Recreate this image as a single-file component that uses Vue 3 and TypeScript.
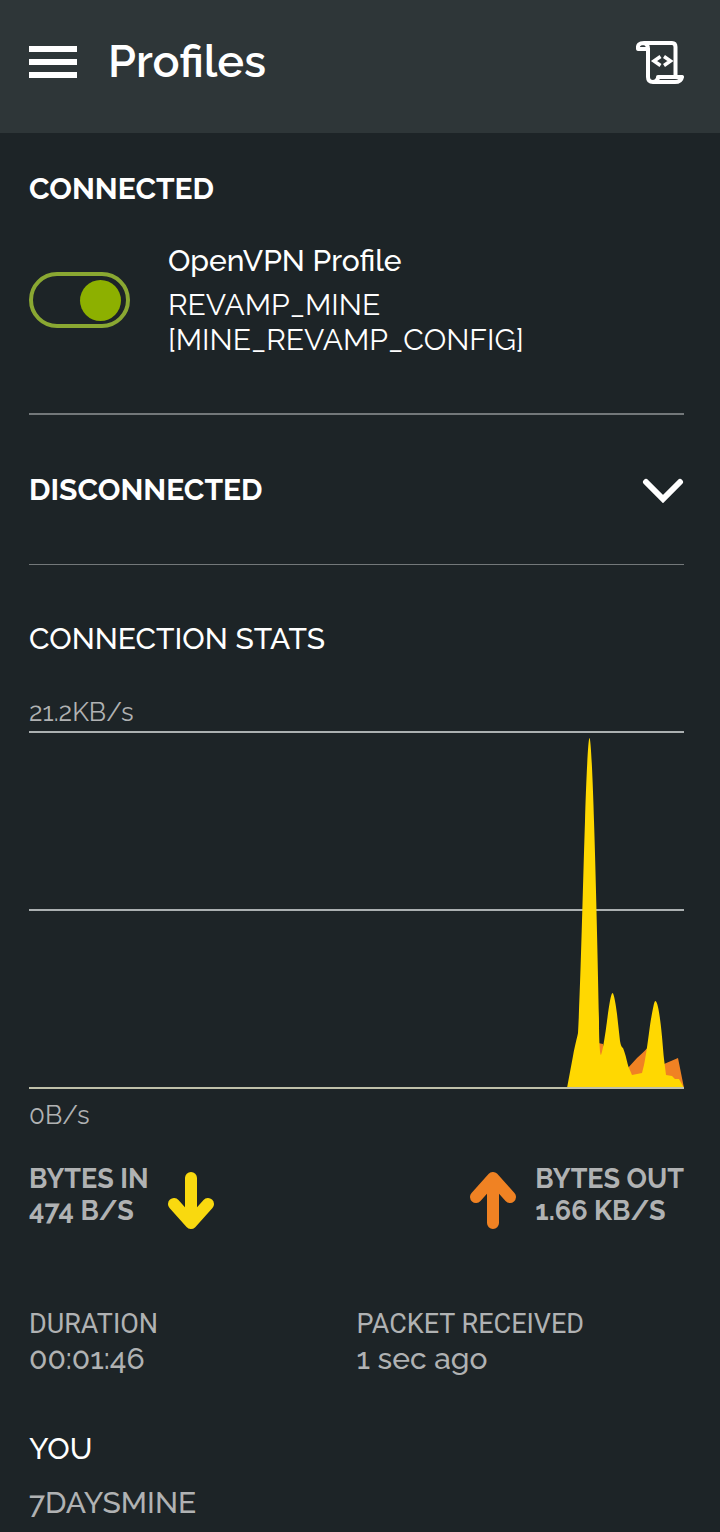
<script setup lang="ts">
import { ref } from 'vue'

interface Profile {
  kind: string
  name: string
}

const profile: Profile = {
  kind: 'OpenVPN Profile',
  name: 'REVAMP_MINE [MINE_REVAMP_CONFIG]',
}
const connected = ref(true)

const gridLines: number[] = [1, 179, 357]

const bytesInArea =
  'M538 357 L544 325 C546 314 548 307 549 302 C552 245 554 150 556 90 C557 55 559 7 560.5 7 C562 7 564 55 565 90 C567 150 569 240 570 290 C570 310 571 324 572 324 C574 320 577 298 578 290 C580 275 582 262 583.5 262 C585 262 587 275 588 283 L591 310 Q592 316 594 317 C597 324 598 332 600 337 L603 344 L613 342 L615 334 C618 320 620 300 622 288 C624 278 625 270 626.5 270 C628 270 630 279 631 288 C633 302 634 318 635 328 L637 344 L643 345 L646 348 L650 348 L655 357 Z'
const bytesOutArea =
  'M569 357 L569 312 L574 313 L576 330 L598 338 L608 327 Q617 319 622 313 L635 333 L649 327 L655 357 Z'
</script>

<template>
  <div class="screen">
    <header class="bar">
      <button class="icon-button" type="button" aria-label="Menu">
        <svg width="48" height="32" viewBox="0 0 48 32" fill="#fff">
          <rect width="48" height="6" />
          <rect y="13" width="48" height="6" />
          <rect y="26" width="48" height="6" />
        </svg>
      </button>
      <h1>Profiles</h1>
      <button class="icon-button" type="button" aria-label="Log">
        <svg width="48" height="44" viewBox="0 0 48 44" fill="none" stroke="#fff" stroke-width="4" stroke-linejoin="round">
          <path d="M8 3H36Q39.500 3 39.500 7V35" />
          <path d="M12 8V37Q12 42 17 42H39Q45 42 46 37H22V38Q21 42 17 42" />
          <path d="M12 9H2Q1 3 8 3Q12 4 12 9" />
          <path d="M24.500 16.500L18 21L24.500 25.500M28 16.500L34.500 21L28 25.500" stroke-width="3.500" stroke-linejoin="miter" />
        </svg>
      </button>
    </header>

    <main>
      <section class="connected">
        <h2 class="strong">CONNECTED</h2>
        <div class="profile">
          <input id="profile-switch" v-model="connected" class="switch" type="checkbox" role="switch" />
          <label for="profile-switch">
            <span class="kind">{{ profile.kind }}</span>
            <span class="name">{{ profile.name }}</span>
          </label>
        </div>
      </section>

      <section class="disconnected">
        <h2 class="strong">DISCONNECTED</h2>
        <button class="icon-button" type="button" aria-label="Show disconnected profiles">
          <svg width="42" height="26" viewBox="0 0 42 26" fill="none" stroke="#fff" stroke-width="6" stroke-linecap="round">
            <path d="M4 5L21 22L38 5" />
          </svg>
        </button>
      </section>

      <section class="stats">
        <h2>CONNECTION STATS</h2>
        <p class="scale">21.2KB/s</p>
        <svg class="chart" viewBox="0 0 655 358" preserveAspectRatio="none" role="img" aria-label="Connection speed">
          <line v-for="y in gridLines" :key="y" x1="0" x2="655" :y1="y" :y2="y" stroke="#abb0b1" stroke-width="2" />
          <path :d="bytesOutArea" fill="#f08223" />
          <path :d="bytesInArea" fill="#ffd801" />
          <line x1="0" x2="655" y1="357" y2="357" stroke="#bfc0aa" stroke-width="2" />
        </svg>
        <p class="scale">0B/s</p>

        <div class="traffic">
          <div class="flow">
            <p>BYTES IN<br />474 B/S</p>
            <svg width="46" height="58" viewBox="0 0 46 58" fill="none" stroke="#f9d90f" stroke-width="12" stroke-linecap="round" stroke-linejoin="round">
              <path d="M23 6V51M6 32L23 51L40 32" />
            </svg>
          </div>
          <div class="flow">
            <svg width="46" height="58" viewBox="0 0 46 58" fill="none" stroke="#f08223" stroke-width="12" stroke-linecap="round" stroke-linejoin="round">
              <path d="M23 51V6M6 25L23 6L40 25" />
            </svg>
            <p>BYTES OUT<br />1.66 KB/S</p>
          </div>
        </div>

        <dl class="facts">
          <div>
            <dt>DURATION</dt>
            <dd>00:01:46</dd>
          </div>
          <div>
            <dt>PACKET RECEIVED</dt>
            <dd>1 sec ago</dd>
          </div>
        </dl>
      </section>

      <section class="you">
        <h2>YOU</h2>
        <p>7DAYSMINE</p>
      </section>
    </main>
  </div>
</template>

<style>
body {
  margin: 0;
  background: #1d2427;
}
</style>

<style scoped>
.screen {
  min-height: 100vh;
  background: #1d2427;
  color: #fff;
  font-family: Raleway, Lato, sans-serif;
  overflow: hidden;
}
h1,
h2,
p,
dl,
dd {
  margin: 0;
}
svg {
  display: block;
}
.bar {
  display: flex;
  align-items: center;
  gap: 31px;
  padding: 32px 36px 41px 29px;
  background: #2e3638;
}
h1 {
  flex: 1;
  font-size: 45px;
  line-height: 60px;
  font-weight: 600;
}
.icon-button {
  padding: 0;
  border: 0;
  background: none;
  cursor: pointer;
}
main {
  padding: 0 36px 0 29px;
}
h2 {
  font-size: 30px;
  line-height: 36px;
  font-weight: 500;
}
.strong {
  font-weight: 700;
}
.connected {
  padding: 38px 0 56px;
  border-bottom: 2px solid #73787a;
}
.profile {
  display: flex;
  align-items: center;
  gap: 38px;
  margin-top: 36px;
}
.switch {
  flex: none;
  display: flex;
  align-items: center;
  justify-content: flex-start;
  appearance: none;
  box-sizing: border-box;
  width: 101px;
  height: 56px;
  margin: 0;
  padding: 0 5px;
  border: 4px solid #8aa832;
  border-radius: 28px;
}
.switch::before {
  content: '';
  width: 41px;
  height: 41px;
  border-radius: 50%;
  background: #8db000;
}
.switch:checked {
  justify-content: flex-end;
}
.kind,
.name {
  display: block;
  font-size: 30px;
  line-height: 35px;
}
.kind {
  margin-bottom: 9px;
  font-weight: 500;
}
.name {
  max-width: 360px;
  font-weight: 400;
}
.disconnected {
  display: flex;
  align-items: center;
  justify-content: space-between;
  padding: 57px 0 56px;
  border-bottom: 1px solid #73787a;
}
.stats {
  padding-top: 56px;
  color: #b0b2b3;
}
.stats h2 {
  color: #fff;
}
.scale {
  font-size: 26px;
  line-height: 32px;
}
h2 + .scale {
  margin-top: 39px;
}
.chart {
  width: 100%;
  height: 358px;
  margin: 3px 0 10px;
}
.traffic {
  display: flex;
  justify-content: space-between;
  margin-top: 32px;
}
.flow {
  display: flex;
  align-items: flex-start;
  gap: 19px;
  font-size: 27px;
  line-height: 32px;
  font-weight: 700;
}
.flow svg {
  margin-top: 9px;
}
.facts {
  display: grid;
  grid-template-columns: 1fr 1fr;
  margin-top: 78px;
}
dt {
  font-family: Roboto, sans-serif;
  font-size: 27px;
  line-height: 32px;
  font-weight: 400;
}
dd {
  margin-top: 1px;
  font-size: 30px;
  line-height: 36px;
  font-weight: 500;
}
.you {
  padding: 54px 0 12px;
}
.you p {
  margin-top: 18px;
  font-size: 30px;
  line-height: 36px;
  font-weight: 500;
  color: #b0b2b3;
}
</style>
